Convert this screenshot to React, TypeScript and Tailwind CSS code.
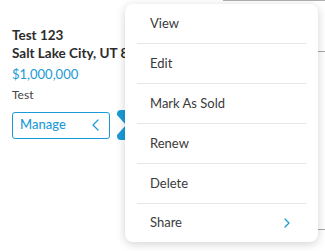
import React from 'react';

const menuItems = ['View', 'Edit', 'Mark As Sold', 'Renew', 'Delete'];

export default function App() {
  return (
    <div
      className="relative w-[325px] h-[251px] overflow-hidden bg-white flex"
      style={{ fontFamily: 'Lato, "Open Sans", sans-serif' }}
    >
      {/* Listing card */}
      <div className="w-[223px] shrink-0 pl-3 pt-[26px] whitespace-nowrap">
        <p className="text-[13.5px] font-bold text-[#2b2b2b] leading-[18px]">Test 123</p>
        <p className="w-[113px] overflow-hidden text-[13.5px] font-bold text-[#2b2b2b] leading-[18px]">Salt Lake City, UT 84101</p>
        <p className="mt-[3px] text-[13px] text-[#1a9ad6] leading-[18px]">$1,000,000</p>
        <p className="mt-[4px] text-[12px] text-[#444] leading-[16px]">Test</p>
        <div className="mt-[7px] flex items-center gap-[7px]">
          <div className="w-[98px] h-[27px] rounded-[3px] border border-[#1a9ad6] flex items-center justify-between pl-[7px] pr-[10px]">
            <span className="text-[13px] font-medium text-[#1a9ad6]">Manage</span>
            <svg width="7" height="12" viewBox="0 0 7 12" fill="none">
              <path d="M6 1 1 6l5 5" stroke="#1a9ad6" strokeWidth="1.2" strokeLinecap="round" strokeLinejoin="round" />
            </svg>
          </div>
          <svg width="10" height="30" viewBox="0 0 10 30">
            <rect x="0" y="0" width="14" height="30" rx="4" fill="#1a9ad6" />
            <polygon points="0,5 0,25 9,15" fill="#fff" />
          </svg>
        </div>
      </div>

      {/* Background panel edges */}
      <div className="flex-1 border-t border-[#b0b0b0]">
        <div className="h-[51px] border-b border-[#a8a8a8]" />
        <div className="h-[178px] border-b border-[#a8a8a8]" />
      </div>

      {/* Dropdown menu */}
      <div className="absolute left-[125px] top-[4px] w-[193px] rounded-lg bg-white shadow-[0_2px_10px_rgba(0,0,0,0.18)] px-3">
        {menuItems.map((label) => (
          <div key={label} className="h-10 border-b border-[#e6e6e6] flex items-center pl-[13px] text-[13px] text-[#3a3a3a]">
            {label}
          </div>
        ))}
        <div className="h-[38px] flex items-center justify-between pl-[13px] pr-[16px] text-[13px] text-[#3a3a3a]">
          Share
          <svg width="6" height="10" viewBox="0 0 6 10" fill="none">
            <path d="M1 1l4 4-4 4" stroke="#1a9ad6" strokeWidth="1.2" strokeLinecap="round" strokeLinejoin="round" />
          </svg>
        </div>
      </div>
    </div>
  );
}
